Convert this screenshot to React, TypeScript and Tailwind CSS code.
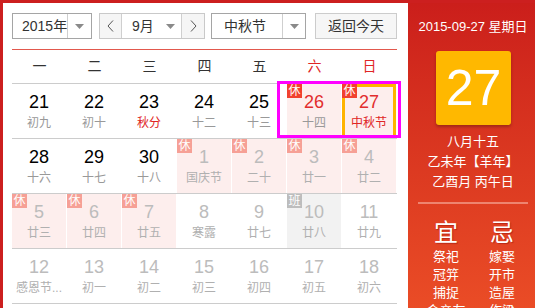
import React from "react";

type Cell = {
  d: number;
  l: string;
  lr?: boolean;
  rest?: boolean;
  work?: boolean;
  other?: boolean;
  red?: boolean;
  sel?: boolean;
};

const rows: Cell[][] = [
  [
    { d: 21, l: "初九" },
    { d: 22, l: "初十" },
    { d: 23, l: "秋分", lr: true },
    { d: 24, l: "十二" },
    { d: 25, l: "十三" },
    { d: 26, l: "十四", rest: true, red: true },
    { d: 27, l: "中秋节", rest: true, red: true, lr: true, sel: true },
  ],
  [
    { d: 28, l: "十六" },
    { d: 29, l: "十七" },
    { d: 30, l: "十八" },
    { d: 1, l: "国庆节", rest: true, other: true },
    { d: 2, l: "二十", rest: true, other: true },
    { d: 3, l: "廿一", rest: true, other: true },
    { d: 4, l: "廿二", rest: true, other: true },
  ],
  [
    { d: 5, l: "廿三", rest: true, other: true },
    { d: 6, l: "廿四", rest: true, other: true },
    { d: 7, l: "廿五", rest: true, other: true },
    { d: 8, l: "寒露", other: true },
    { d: 9, l: "廿七", other: true },
    { d: 10, l: "廿八", work: true, other: true },
    { d: 11, l: "廿九", other: true },
  ],
  [
    { d: 12, l: "感恩节...", other: true },
    { d: 13, l: "初一", other: true },
    { d: 14, l: "初二", other: true },
    { d: 15, l: "初三", other: true },
    { d: 16, l: "初四", other: true },
    { d: 17, l: "初五", other: true },
    { d: 18, l: "初六", other: true },
  ],
];

const weekdays = ["一", "二", "三", "四", "五", "六", "日"];

function Caret() {
  return (
    <svg width="9" height="5" viewBox="0 0 9 5" className="block">
      <path d="M0 0 L9 0 L4.5 5 Z" fill="#8a8a8a" />
    </svg>
  );
}

function Chevron({ dir }: { dir: "l" | "r" }) {
  return (
    <svg width="7" height="12" viewBox="0 0 7 12" className="block">
      <path
        d={dir === "l" ? "M6 0.5 L1 6 L6 11.5" : "M1 0.5 L6 6 L1 11.5"}
        fill="none"
        stroke="#555"
        strokeWidth="1"
      />
    </svg>
  );
}

function DayCell({ c }: { c: Cell }) {
  let bg = "bg-white";
  if (c.rest) bg = "bg-[#fdeeed]";
  if (c.work) bg = "bg-[#f2f2f2]";
  const numColor = c.red ? "text-[#e22d2d]" : c.other ? "text-[#bcbcbc]" : "text-black";
  const lunarColor = c.lr ? "text-[#e02525]" : c.other ? "text-[#b0b0b0]" : "text-[#999999]";
  const badgeColor = c.work
    ? "bg-[#bdbdbd]"
    : c.other
    ? "bg-[#f6a096]"
    : "bg-[#f1412f]";
  return (
    <div className="h-[54px] pr-px">
      <div className={`relative h-full ${bg} flex flex-col items-center pt-[7px]`}>
        {c.sel && <div className="absolute inset-0 border-[3px] border-[#ffb400]" />}
        {(c.rest || c.work) && (
          <div
            className={`absolute left-0 top-0 w-[15px] h-[14px] ${badgeColor} text-white text-[12px] leading-[14px] flex items-center justify-center`}
          >
            {c.work ? "班" : "休"}
          </div>
        )}
        <div className={`relative text-[18px] leading-[23px] ${numColor}`}>{c.d}</div>
        <div className={`relative text-[12px] leading-[18px] whitespace-nowrap ${lunarColor}`}>{c.l}</div>
      </div>
    </div>
  );
}

export default function App() {
  return (
    <div
      className="w-[535px] h-[308px] overflow-hidden bg-white"
      style={{ fontFamily: '"Liberation Sans", Arial, "Noto Sans CJK SC", sans-serif' }}
    >
      <div className="w-[538px] h-[308px] flex border-t-[3px] border-l-[3px] border-[#cc1f1f]">
        {/* Left calendar */}
        <div className="w-[405px] shrink-0 pl-[9px] pt-[10px]">
          {/* toolbar */}
          <div className="flex items-center h-[26px] text-[14px] text-[#333] whitespace-nowrap">
            <div className="w-[80px] h-[26px] border border-[#a5a5a5] flex">
              <div className="w-[54px] pl-[9px] flex items-center">2015年</div>
              <div className="flex-1 border-l border-[#cfcfcf] flex items-center justify-center">
                <Caret />
              </div>
            </div>
            <div className="ml-[7px] w-[106px] h-[26px] border border-[#c9c9c9] flex">
              <div className="w-[22px] bg-[#f5f5f5] border-r border-[#cfcfcf] flex items-center justify-center">
                <Chevron dir="l" />
              </div>
              <div className="w-[59px] flex items-center pl-[10px] pr-[6px] justify-between">
                <span>9月</span>
                <Caret />
              </div>
              <div className="flex-1 bg-[#f5f5f5] border-l border-[#cfcfcf] flex items-center justify-center">
                <Chevron dir="r" />
              </div>
            </div>
            <div className="ml-[6px] w-[95px] h-[26px] border border-[#a5a5a5] flex">
              <div className="w-[70px] pl-[12px] flex items-center">中秋节</div>
              <div className="flex-1 border-l border-[#cfcfcf] flex items-center justify-center">
                <Caret />
              </div>
            </div>
            <div className="ml-[9px] w-[82px] h-[26px] border border-[#cccccc] bg-[#f6f6f6] flex items-center justify-center">
              返回今天
            </div>
          </div>
          <div className="mt-[10px] w-[385px] h-px bg-[#e2584d]" />
          {/* weekday header */}
          <div className="w-[385px] grid grid-cols-7 h-[34px] border-b border-[#cccccc] text-[14px]">
            {weekdays.map((w, i) => (
              <div
                key={w}
                className={`flex items-center justify-center ${i >= 5 ? "text-[#e02525]" : "text-[#333]"}`}
              >
                {w}
              </div>
            ))}
          </div>
          {/* rows */}
          {rows.map((r, ri) => (
            <div key={ri} className="relative w-[385px] grid grid-cols-7 border-b border-[#cccccc]">
              {r.map((c, ci) => (
                <DayCell key={ci} c={c} />
              ))}
              {ri === 0 && (
                <div className="absolute left-[265px] top-[-3px] w-[124px] h-[57px] border-[3px] border-[#ff00ff]" />
              )}
            </div>
          ))}
        </div>

        {/* Right panel */}
        <div className="w-[130px] shrink-0 h-full overflow-hidden bg-gradient-to-b from-[#cb1e1b] to-[#ea4c26] text-white pt-[16px]">
          <div className="text-[13px] leading-[16px] text-center whitespace-nowrap">2015-09-27 星期日</div>
          <div className="mt-[16px] ml-[28px] w-[75px] h-[74px] rounded-[3px] bg-[#ffb800] shadow-[0_2px_3px_rgba(0,0,0,0.25)] flex items-center justify-center text-[50px] leading-none">
            27
          </div>
          <div className="mt-[7px] text-[13px] leading-[20px] text-center whitespace-nowrap">
            <div>八月十五</div>
            <div>乙未年【羊年】</div>
            <div>乙酉月 丙午日</div>
          </div>
          <div className="mt-[10px] ml-[10px] w-[110px] h-[2px] bg-[#ee8470]" />
          <div className="mt-[17px] pl-[10px] flex text-center">
            <div className="w-[56px] flex flex-col items-center">
              <div className="text-[24px] leading-[24px] [text-shadow:1px_1px_1px_rgba(120,0,0,0.4)]">宜</div>
              <div className="mt-[3px] text-[13px] leading-[18px] whitespace-nowrap">
                <div>祭祀</div>
                <div>冠笄</div>
                <div>捕捉</div>
                <div>会亲友</div>
              </div>
            </div>
            <div className="w-[56px] flex flex-col items-center">
              <div className="text-[24px] leading-[24px] [text-shadow:1px_1px_1px_rgba(120,0,0,0.4)]">忌</div>
              <div className="mt-[3px] text-[13px] leading-[18px] whitespace-nowrap">
                <div>嫁娶</div>
                <div>开市</div>
                <div>造屋</div>
                <div>作梁</div>
              </div>
            </div>
          </div>
        </div>
      </div>
    </div>
  );
}
